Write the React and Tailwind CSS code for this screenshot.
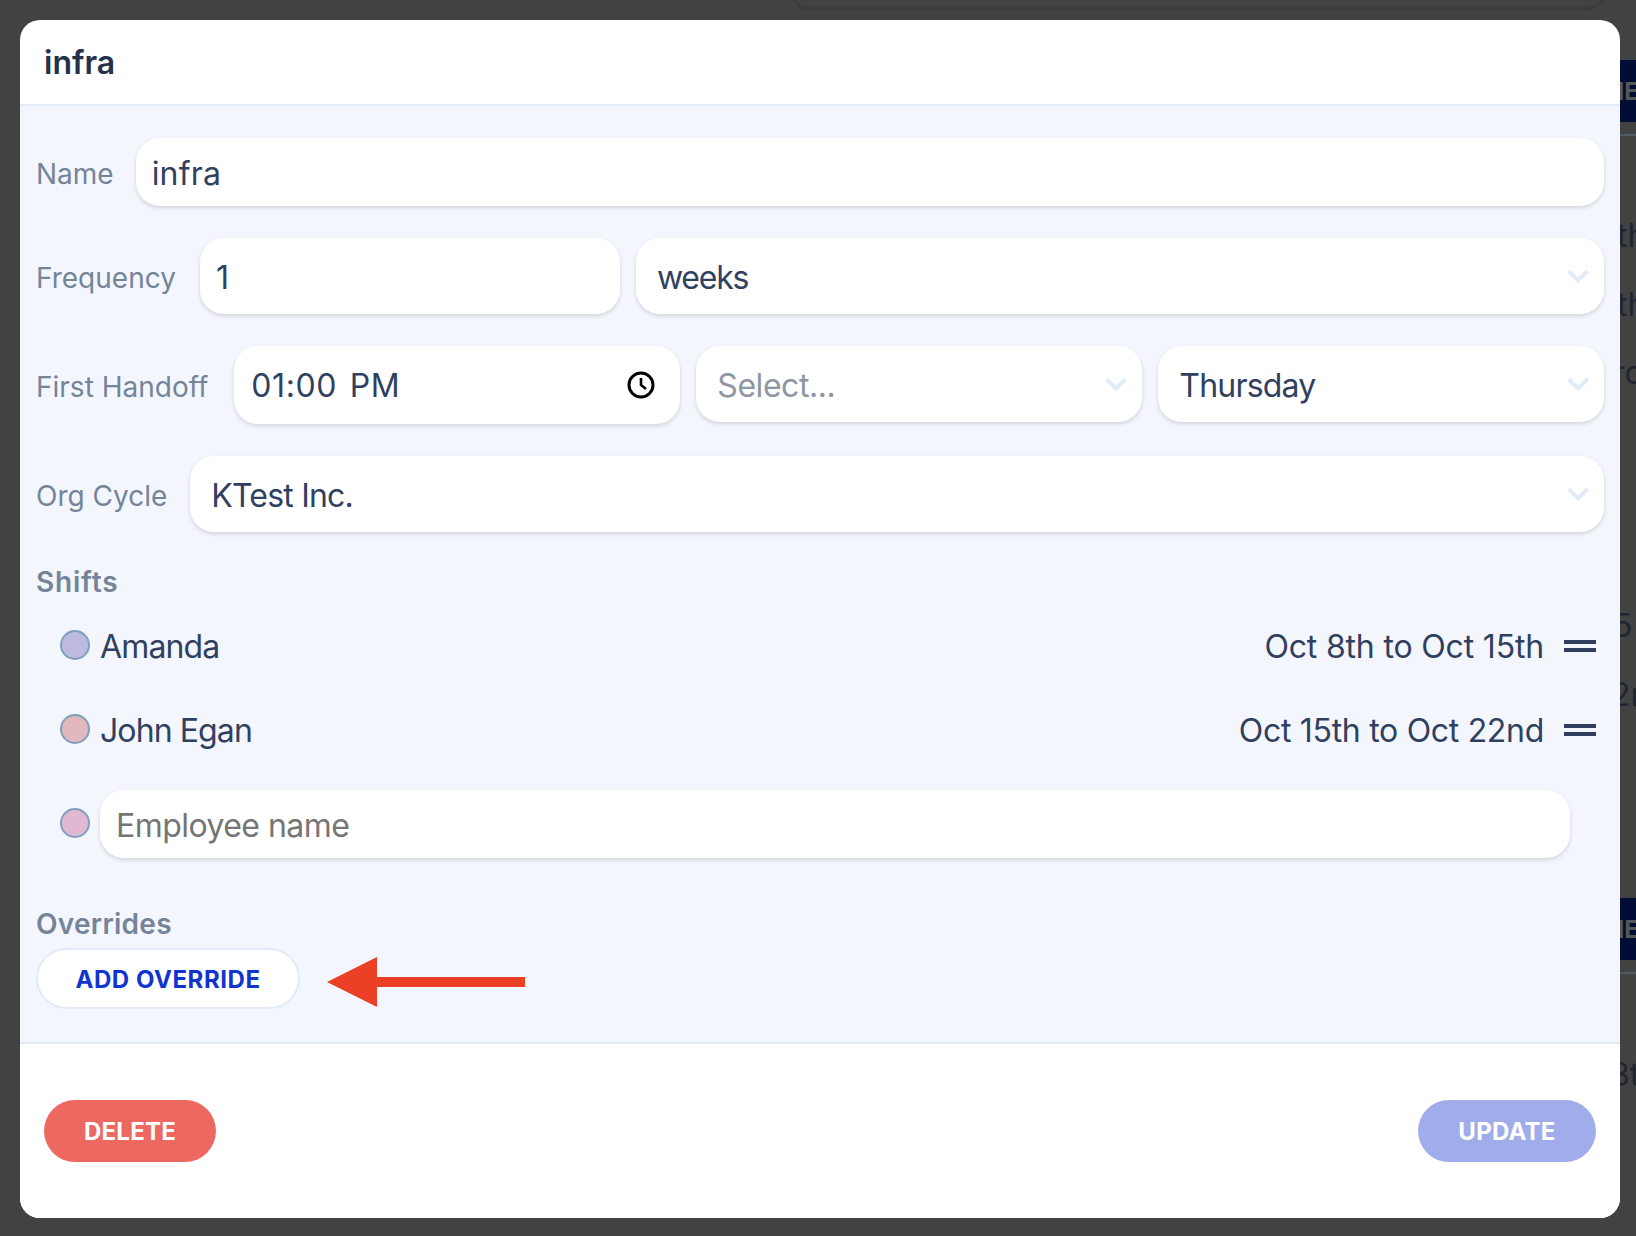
const Chevron = () => (
  <svg width="24" height="16" viewBox="0 0 24 16" fill="none" className="shrink-0">
    <path d="M2.5 3 L12 12.5 L21.5 3" stroke="#e2ecf8" strokeWidth="4" />
  </svg>
);

const fieldText = "text-[32px] text-[#313f60]";
const boxShadow = "shadow-[0_2px_4px_rgba(0,0,0,0.14)]";

function SelectBox({ className, value, placeholder, track }) {
  return (
    <div className={`flex h-[76px] items-center justify-between rounded-[24px] bg-white pl-[21px] pr-[14px] ${boxShadow} ${className}`}>
      <span className={`pt-[4px] ${track} ${placeholder ? "text-[32px] text-[#8f96a3]" : fieldText}`}>{value}</span>
      <Chevron />
    </div>
  );
}

function Label({ children, className = "" }) {
  return <span className={`shrink-0 pt-[4px] text-[28px] leading-none text-[#76849a] ${className}`}>{children}</span>;
}

function Dot({ className }) {
  return <span className={`block h-[30px] w-[30px] shrink-0 rounded-full border-2 border-[#7f9fbd] ${className}`} />;
}

function Shift({ name, dates, color, className = "", nameTrack, dateTrack }) {
  return (
    <div className={`flex h-[30px] items-center pl-[24px] pr-[8px] ${className}`}>
      <Dot className={color} />
      <span className={`ml-[10px] pt-[4px] ${nameTrack} ${fieldText}`}>{name}</span>
      <span className={`ml-auto pt-[4px] ${dateTrack} ${fieldText}`}>{dates}</span>
      <span className="ml-[20px] mt-[1px] flex w-[32px] flex-col gap-[4px]">
        <span className="block h-[4px] bg-[#313f60]" />
        <span className="block h-[4px] bg-[#313f60]" />
      </span>
    </div>
  );
}

function Fragment({ className, children }) {
  return <span className={`absolute whitespace-nowrap text-[32px] leading-none text-[#20252f] ${className}`}>{children}</span>;
}

export default function App() {
  return (
    <div className="relative h-[1236px] w-[1636px] overflow-hidden bg-[#424242] p-[20px] font-['Inter',sans-serif]">
      <div className="absolute left-[793px] top-[-22px] h-[30px] w-[810px] rounded-[20px] border border-[#3c3c3c] shadow-[0_1px_3px_rgba(0,0,0,0.2)]" />

      <div className="absolute left-[1620px] top-0 h-[1236px] w-[16px] overflow-hidden">
        <div className="absolute left-0 top-[60px] h-[62px] w-[16px] bg-[#020d36]">
          <span className="absolute left-[-14px] top-[18px] whitespace-nowrap text-[24px] font-bold leading-[28px] text-[#565656]">NE</span>
        </div>
        <div className="absolute left-0 top-[134px] h-[2px] w-[16px] bg-[#525a63]" />
        <Fragment className="left-[-3px] top-[220px]">th</Fragment>
        <Fragment className="left-[-3px] top-[289px]">th</Fragment>
        <Fragment className="left-[-7px] top-[357px]">ro</Fragment>
        <Fragment className="left-[-7px] top-[610px]">5</Fragment>
        <Fragment className="left-[-9px] top-[679px]">2r</Fragment>
        <div className="absolute left-0 top-[898px] h-[62px] w-[16px] bg-[#020d36]">
          <span className="absolute left-[-14px] top-[18px] whitespace-nowrap text-[24px] font-bold leading-[28px] text-[#565656]">NE</span>
        </div>
        <div className="absolute left-0 top-[972px] h-[2px] w-[16px] bg-[#525a63]" />
        <Fragment className="left-[-10px] top-[1059px]">3t</Fragment>
      </div>

      <div className="relative flex h-[1198px] w-[1600px] flex-col overflow-hidden rounded-[20px] bg-white">
        <div className="flex h-[86px] shrink-0 items-center border-b-2 border-[#e2ecf8] pl-[24px]">
          <h1 className="pt-[2px] text-[32px] font-semibold text-[#25304a]">infra</h1>
        </div>

        <div className="flex flex-1 flex-col bg-[#f3f7fd] pl-[16px] pr-[16px] pt-[32px]">
          <div className="flex items-center gap-[22px]">
            <Label>Name</Label>
            <div className={`flex h-[68px] flex-1 items-center rounded-[24px] bg-white pl-[16px] ${boxShadow}`}>
              <span className={`pt-[4px] tracking-[0.2px] ${fieldText}`}>infra</span>
            </div>
          </div>

          <div className="mt-[32px] flex items-center">
            <Label className="mr-[24px]">Frequency</Label>
            <div className={`flex h-[76px] w-[420px] items-center rounded-[24px] bg-white pl-[16px] ${boxShadow}`}>
              <span className={`pt-[4px] ${fieldText}`}>1</span>
            </div>
            <SelectBox className="ml-[16px] flex-1" value="weeks" track="tracking-[-1.2px]" />
          </div>

          <div className="mt-[32px] flex items-start">
            <Label className="mr-[26px] mt-[23px]">First Handoff</Label>
            <div className={`flex h-[78px] w-[446px] items-center justify-between rounded-[24px] bg-white pl-[17px] pr-[25px] ${boxShadow}`}>
              <span className={`${fieldText} pt-[2px] tracking-[0.6px] [word-spacing:3px]`}>01:00 PM</span>
              <svg width="28" height="28" viewBox="0 0 28 28" fill="none" stroke="#000" strokeWidth="3">
                <circle cx="14" cy="14" r="12" />
                <path d="M14 7 V14 L19 18" strokeWidth="2.6" />
              </svg>
            </div>
            <SelectBox className="ml-[16px] w-[446px]" value="Select..." placeholder track="tracking-[-0.45px]" />
            <SelectBox className="ml-[16px] flex-1" value="Thursday" track="tracking-[-0.8px]" />
          </div>

          <div className="mt-[32px] flex items-center">
            <Label className="mr-[23px]">Org Cycle</Label>
            <SelectBox className="flex-1" value="KTest Inc." track="tracking-[-0.8px]" />
          </div>

          <h2 className="mt-[36px] text-[28px] font-semibold leading-none tracking-[0.8px] text-[#76849a]">Shifts</h2>

          <Shift className="mt-[34px]" name="Amanda" dates="Oct 8th to Oct 15th" color="bg-[#bdb9e0]" nameTrack="tracking-[-0.85px]" dateTrack="tracking-[-0.17px]" />
          <Shift className="mt-[54px]" name="John Egan" dates="Oct 15th to Oct 22nd" color="bg-[#e0b8be]" nameTrack="tracking-[-0.9px]" dateTrack="tracking-[-0.3px]" />

          <div className="mt-[46px] flex items-center pl-[24px]">
            <Dot className="mb-[2px] bg-[#e0b8d2]" />
            <div className={`ml-[10px] flex h-[68px] w-[1470px] items-center rounded-[24px] bg-white pl-[16px] ${boxShadow}`}>
              <span className="pt-[4px] text-[32px] tracking-[-0.55px] text-[#757575]">Employee name</span>
            </div>
          </div>

          <h2 className="mt-[52px] text-[28px] font-semibold leading-none tracking-[0.25px] text-[#76849a]">Overrides</h2>

          <div className="mt-[10px] flex items-center">
            <button className="flex h-[61px] w-[264px] items-center justify-center rounded-full border-2 border-[#e2ecf8] bg-white pt-[2px] text-[24px] font-bold tracking-[0.55px] text-[#1034d0]">ADD OVERRIDE</button>
            <svg width="198" height="50" viewBox="0 0 198 50" className="ml-[27px] mt-[6px] shrink-0">
              <path d="M0 25 L50 0 V20 H198 V30 H50 V50 Z" fill="#ec4026" />
            </svg>
          </div>
        </div>

        <div className="flex h-[176px] shrink-0 items-start justify-between border-t-2 border-[#e2ecf8] bg-white pl-[24px] pr-[24px] pt-[56px]">
          <button className="flex h-[62px] w-[172px] items-center justify-center rounded-full bg-[#ee6862] pt-[1px] text-[24px] font-bold tracking-[0.25px] text-white">DELETE</button>
          <button className="flex h-[62px] w-[178px] items-center justify-center rounded-full bg-[#a0adea] pt-[1px] text-[24px] font-bold tracking-[0.25px] text-white">UPDATE</button>
        </div>
      </div>
    </div>
  );
}
